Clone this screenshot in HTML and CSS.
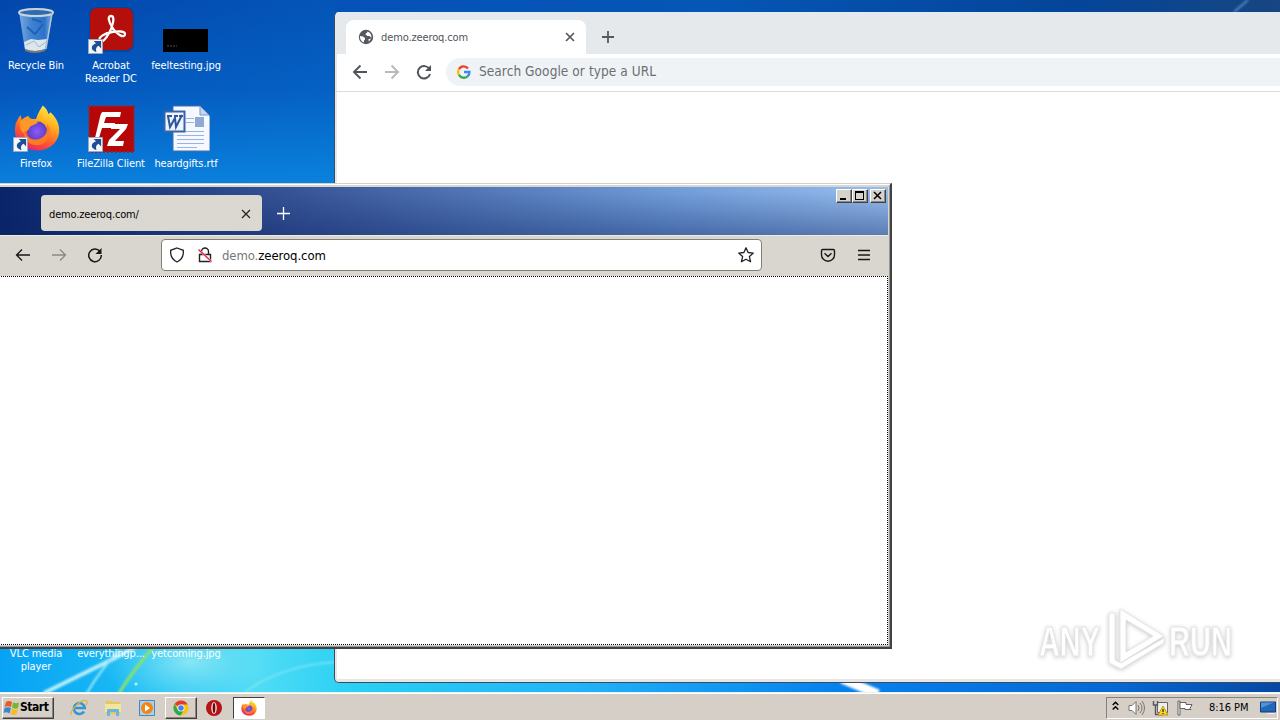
FILE: index.html
```html
<!DOCTYPE html>
<html lang="en">
<head>
<meta charset="utf-8">
<title>Desktop</title>
<link rel="stylesheet" href="styles.css">
</head>
<body>
<svg width="0" height="0" class="defs">
  <defs>
    <linearGradient id="ffBody" x1=".8" y1="0" x2=".3" y2="1"><stop offset="0" stop-color="#fff04a"/><stop offset=".35" stop-color="#ffb01f"/><stop offset=".68" stop-color="#ff5a2c"/><stop offset="1" stop-color="#e8206a"/></linearGradient>
    <radialGradient id="ffGlobe"><stop offset="0" stop-color="#9059ff"/><stop offset="1" stop-color="#5b3fc0"/></radialGradient>
    <symbol id="firefox" viewBox="0 0 48 48">
      <path fill="url(#ffBody)" d="M30 0c4 3 5 6 6 9l2-2c7 6 10 14 9 22-2 11-11 18-22 18C11 47 1 38 1 26c0-7 2-11 6-16l1 5c2-2 4-3 7-4 1 2 2 3 5 3h3c2-6 4-9 7-14z"/>
      <circle cx="24" cy="27" r="10.500" fill="url(#ffGlobe)"/>
      <path fill="#ff9829" d="M7 16c4-3 8-3 11-2 3 0 6 1 7 3-1 3-6 3-8 5-2 3-2 5-6 5l1 3C6 27 5 21 7 16z"/>
      <path fill="#ff7a25" d="M11 27c2 6 8 10 15 8 7-2 10-9 8-16 5 5 5 13 0 18-7 7-18 5-22-2-1-2-2-5-1-8z"/>
    </symbol>
    <symbol id="shortcut" viewBox="0 0 16 16"><path d="M.5.5h15v15H.5z" fill="#f3f7fc" stroke="#9aaabd"/><path d="M6 2h8v8l-2.700-2.700C8.500 8.500 8 11 9 14 2.500 12 2.500 7 8.500 4.500z" fill="#1c4f96"/></symbol>
    <symbol id="chromelogo" viewBox="0 0 18 18"><circle cx="9" cy="9" r="8.500" fill="#fbc116"/><path d="M9 9 1.600 4.800A8.500 8.500 0 0 1 16.500 5H9z" fill="#e33b2e"/><path d="M1.600 4.800A8.500 8.500 0 0 0 8.500 17.500L12.500 11 9 9 5.500 11z" fill="#2da94f"/><circle cx="9" cy="9" r="4" fill="#fff"/><circle cx="9" cy="9" r="3.100" fill="#3f82ee"/></symbol>
  </defs>
</svg>

<main class="desktop">
  <svg class="wallpaper" width="1280" height="692" viewBox="0 0 1280 692">
    <defs>
      <linearGradient id="sky" x1="0" y1="0" x2="0" y2="1"><stop offset="0" stop-color="#0346ac"/><stop offset=".13" stop-color="#0456bd"/><stop offset=".265" stop-color="#0a7fdc"/><stop offset=".9" stop-color="#079df0"/><stop offset="1" stop-color="#09a5f4"/></linearGradient>
      <linearGradient id="topBand"><stop offset="0" stop-color="#0552b8"/><stop offset=".4" stop-color="#0556b5"/><stop offset=".78" stop-color="#04459a"/><stop offset="1" stop-color="#174681"/></linearGradient>
      <linearGradient id="low"><stop offset="0" stop-color="#08a2f5"/><stop offset=".09" stop-color="#18b8f4"/><stop offset=".2" stop-color="#50dcf5"/><stop offset=".28" stop-color="#28d0f4"/><stop offset=".45" stop-color="#20b4f8"/><stop offset=".65" stop-color="#0683ef"/><stop offset=".87" stop-color="#0569d6"/><stop offset="1" stop-color="#0648a4"/></linearGradient>
      <linearGradient id="side"><stop offset="0" stop-color="#0a8fe0" stop-opacity="0"/><stop offset="1" stop-color="#0a8fe0" stop-opacity=".2"/></linearGradient>
      <radialGradient id="glow"><stop offset="0" stop-color="#9cecf5" stop-opacity=".8"/><stop offset="1" stop-color="#65dff6" stop-opacity="0"/></radialGradient>
      <filter id="soft"><feGaussianBlur stdDeviation="1"/></filter>
    </defs>
    <path fill="url(#sky)" d="M0 0h1280v692H0z"/>
    <path fill="url(#side)" d="M0 0h335v183H0z"/>
    <path fill="url(#topBand)" d="M335 0h945v12H335z"/>
    <path fill="url(#low)" d="M0 640h1280v52H0z"/>
    <ellipse cx="190" cy="662" rx="90" ry="45" fill="url(#glow)"/>
    <g fill="none" filter="url(#soft)">
      <path d="M44 693 115 658 155 636" stroke="#b9effb" stroke-width="4"/>
      <path d="M87 693Q99 672 122 646" stroke="#9ee8f7" stroke-width="2"/>
      <path d="M119 693Q132 672 155 645" stroke="#8be36a" stroke-width="3"/>
      <path d="M245 692q35-26 90-30" stroke="#7fe6f6" stroke-width="1.500"/>
      <path d="m842 679 36 15" stroke="#fff" stroke-width="9"/>
      <path d="m1234 12 14-12" stroke="#5789bd" stroke-width="2"/>
    </g>
    <circle cx="136" cy="684" r="1.500" fill="#b7f1fa"/>
  </svg>

  <section class="icons">
    <div class="icon"><svg width="48" height="48" viewBox="0 0 48 48">
      <defs><linearGradient id="bin"><stop offset="0" stop-color="#91b9e6"/><stop offset=".35" stop-color="#4c8cd6"/><stop offset=".75" stop-color="#327ace"/><stop offset="1" stop-color="#9fc3e8"/></linearGradient></defs>
      <path d="M7 5 13 43q10 5 21 0L41 5z" fill="url(#bin)" opacity=".85"/>
      <path d="m12 35 7-3 7 1 9-1-2 10q-10 4-20 0z" fill="#dce6ee"/><path d="m14 38 8-4 5 6 7-5" stroke="#a3b5c4" fill="none"/>
      <path d="M13 42q10 4 20 0v2q-10 4-20 0z" fill="#82786c"/>
      <path d="m15 20 8 7 8-10M20 12l10 3" stroke="#1d62b4" stroke-width="2" fill="none"/>
      <ellipse cx="24" cy="5.500" rx="17" ry="3.500" fill="#2f6cad" stroke="#c8d4dc" stroke-width="2"/><path d="m40 6-6 36" stroke="#b2c4d1" stroke-width="1.500"/>
    </svg><span>Recycle Bin</span></div>

    <div class="icon"><svg width="48" height="48" viewBox="0 0 48 48">
      <rect x="2" y="0" width="45" height="45" rx="8" fill="#0a3e91" opacity=".7"/><rect x="3" y="1" width="43" height="42" rx="7" fill="#b50f0b"/>
      <path d="M13 34c-3-4 6-8 12-9 6-1 13-1 13 2 0 5-8 1-13-7-3-5-5-11-1-11 5 0 1 12-2 17-3 6-7 10-9 8z" fill="none" stroke="#fff" stroke-width="2.300"/>
      <use href="#shortcut" x="1" y="32" width="15" height="15"/>
    </svg><span>Acrobat<br>Reader DC</span></div>

    <div class="icon"><svg width="48" height="48" viewBox="0 0 48 48"><path d="M1 22h45v23H1z" fill="#000"/><path d="M5 39h10" stroke="#55524b" stroke-dasharray="2 1"/></svg><span>feeltesting.jpg</span></div>

    <div class="icon"><svg width="48" height="48" viewBox="0 0 48 48"><use href="#firefox" x="2" y="0" width="46" height="47"/><use href="#shortcut" x="1" y="32" width="15" height="15"/></svg><span>Firefox</span></div>

    <div class="icon"><svg width="48" height="48" viewBox="0 0 48 48">
      <path d="M2 1h45v46H2z" fill="#b50708"/><path d="M2 1h45v46H2z" fill="none" stroke="#7b3048" stroke-width="2" stroke-dasharray="2 2"/>
      <path d="M16 7h18l-1 5H19l-2 6h11l-1 5H15l-3 10H8l5-21q1-5 3-5zM25 19h16l-2 5-11 12h9l-1 5H20l2-6 11-11h-9z" fill="#fff"/>
      <use href="#shortcut" x="1" y="32" width="15" height="15"/>
    </svg><span>FileZilla Client</span></div>

    <div class="icon"><svg width="48" height="48" viewBox="0 0 48 48">
      <path d="M11 1h27l10 10v35H11z" fill="#f5f8ff" stroke="#466fa8"/><path d="M38 1v9h9z" fill="#c4d6f3" stroke="#7899ca"/>
      <path d="M24 13.500h8m-8 4h8m-17 9h27m-27 4h27m-27 4h27m-27 4h27m-27 4h20" stroke="#9bb4dc"/><path d="M33 12h9v10h-9z" fill="#8fa9d1"/>
      <path d="M2.500 6.500h20v20h-20z" fill="#edf3ff" stroke="#3963a9" stroke-width="2"/><path d="m6 11 2 11 5-9 1 9 6-12M5 11h5m2 0h4m1 0h4" fill="none" stroke="#2b579f" stroke-width="2"/>
    </svg><span>heardgifts.rtf</span></div>

    <div class="icon last"><svg width="48" height="48" viewBox="0 0 48 48"><path d="m24 2 15 42H9z" fill="#f08a12"/></svg><span>VLC media<br>player</span></div>
    <div class="icon last"><svg width="48" height="48"></svg><span>everythingp...</span></div>
    <div class="icon last"><svg width="48" height="48"></svg><span>yetcoming.jpg</span></div>
  </section>

  <section class="chrome">
    <div class="c-tabs">
      <div class="c-tab">
        <svg width="16" height="16" viewBox="0 0 16 16"><circle cx="8" cy="8" r="7.200" fill="#55595e"/><path d="M2 7l3 .5 2 1.500v1.500l-1 1v2C3 12.500 1.800 10 2 7zM9.500 2.500c0 1.500-2 1.500-2 3l2 1.500h2L13.500 9c0-3-1-5.500-4-6.500zM10.500 10l2.500-.3-2.200 3z" fill="#fff"/></svg>
        <span>demo.zeeroq.com</span>
        <svg width="10" height="10" viewBox="0 0 10 10"><path d="m1 1 8 8M9 1 1 9" stroke="#55595e" stroke-width="1.700"/></svg>
      </div>
      <svg class="c-plus" width="12" height="12" viewBox="0 0 12 12"><path d="M6 0v12M0 6h12" stroke="#55595e" stroke-width="1.800"/></svg>
    </div>
    <div class="c-bar">
      <svg width="16" height="16" viewBox="0 0 16 16" fill="none" stroke="#505459" stroke-width="1.900"><path d="M15 8H2m6.500-6.500L2 8l6.500 6.500"/></svg>
      <svg width="16" height="16" viewBox="0 0 16 16" fill="none" stroke="#b7babd" stroke-width="1.900"><path d="M1 8h13M7.500 1.500 14 8l-6.500 6.500"/></svg>
      <svg width="16" height="16" viewBox="0 0 16 16"><path d="M13.500 5.300A6.200 6.200 0 1 0 14 10" fill="none" stroke="#505459" stroke-width="2"/><path d="M15 1v6H9z" fill="#505459"/></svg>
      <div class="c-url">
        <svg width="14" height="14" viewBox="0 0 14 14" fill="none" stroke-width="2.300"><path d="M2 4.300A5.300 5.300 0 0 1 11 3.500" stroke="#ea4335"/><path d="M2 4.200a5.300 5.300 0 0 0 0 5.600" stroke="#fbbc05"/><path d="M2 9.700a5.300 5.300 0 0 0 8.500 1.500" stroke="#34a853"/><path d="M7 7h5.500q0 3-2 4.500" stroke="#4285f4"/></svg>
        <span>Search Google or type a URL</span>
      </div>
    </div>
    <div class="c-page">
      <svg class="mark" width="245" height="80" viewBox="0 0 245 80">
        <g class="mark-ink">
          <text x="9" y="54" textLength="61" lengthAdjust="spacingAndGlyphs">ANY</text>
          <text x="139" y="54" textLength="63" lengthAdjust="spacingAndGlyphs">RUN</text>
          <path fill-rule="evenodd" d="M90 7 134 34 90 61zM96 18v32l27-16z"/>
          <path d="M85 11h-6v50l12 6 43-26v-5L91 61l-6-3z"/>
        </g>
      </svg>
    </div>
  </section>

  <section class="fox">
    <header class="f-title">
      <div class="f-tab"><span>demo.zeeroq.com/</span><svg width="10" height="10" viewBox="0 0 10 10"><path d="m1 1 8 8M9 1 1 9" stroke="#222" stroke-width="1.200"/></svg></div>
      <svg class="f-plus" width="13" height="13" viewBox="0 0 13 13"><path d="M6.500 0v13M0 6.500h13" stroke="#fff" stroke-width="1.300"/></svg>
      <div class="f-buttons">
        <i><svg width="12" height="11"><path d="M2 8h6v2H2z"/></svg></i><i><svg width="12" height="11"><path d="M1 1h9v9H1zM2 3v6h7V3z" fill-rule="evenodd"/></svg></i><i class="gap"><svg width="12" height="11"><path d="m2 2 7 7M9 2 2 9" stroke="#000" stroke-width="1.500"/></svg></i>
      </div>
    </header>
    <div class="f-bar">
      <svg width="16" height="16" viewBox="0 0 16 16" fill="none" stroke="#171717" stroke-width="1.300"><path d="M15 8H1.500M7 2.500 1.500 8 7 13.500"/></svg>
      <svg width="16" height="16" viewBox="0 0 16 16" fill="none" stroke="#8b8985" stroke-width="1.300"><path d="M1 8h13.500M9 2.500 14.500 8 9 13.500"/></svg>
      <svg width="16" height="16" viewBox="0 0 16 16"><path d="M13 4.500A6.300 6.300 0 1 0 14.300 8" fill="none" stroke="#171717" stroke-width="1.500"/><path d="M14.500 1v6h-6z" fill="#171717"/></svg>
      <div class="f-url">
        <svg width="16" height="16" viewBox="0 0 16 16" fill="none" stroke="#222" stroke-width="1.300"><path d="m8 1 6.300 2.300c.5 6-1.800 9.700-6.300 11.700-4.500-2-6.800-5.700-6.300-11.700z"/></svg>
        <svg width="16" height="16" viewBox="0 0 16 16" fill="none" stroke="#222" stroke-width="1.400"><path d="M4.500 7V4.500a3.500 3.500 0 0 1 7 0V7M2.500 7.500h11v7h-11z"/><path d="m1.500 2.500 13 12" stroke="#fff" stroke-width="2"/><path d="m1.500 2.500 13 12" stroke="#e22850" stroke-width="1.500"/></svg>
        <p><span>demo.</span>zeeroq.com</p>
        <svg class="star" width="16" height="16" viewBox="0 0 16 16" fill="none" stroke="#222" stroke-width="1.300" stroke-linejoin="round"><path d="m8 .8 2.100 4.700 5.200.6-3.900 3.500 1.200 5.200L8 12.200l-4.600 2.600 1.200-5.200L.7 6.100l5.200-.6z"/></svg>
      </div>
      <svg class="pocket" width="16" height="16" viewBox="0 0 16 16" fill="none" stroke="#171717" stroke-width="1.400"><path d="M2.700 2.500h10.600q1.200 0 1.200 1.200v4a6.500 6.500 0 0 1-13 0v-4q0-1.200 1.200-1.200z"/><path d="m4.500 6.300 3.500 3.200 3.500-3.200"/></svg>
      <svg class="burger" width="14" height="14" viewBox="0 0 14 14"><path d="M1 2.500h12M1 7h12M1 11.500h12" stroke="#171717" stroke-width="1.300"/></svg>
    </div>
    <div class="f-page"></div>
  </section>
</main>

<footer class="taskbar">
  <div class="start"><svg width="17" height="16" viewBox="0 0 17 16"><path d="M3 2q3-2 6 0L8 7Q5 5.500 1.500 7z" fill="#ea5a25"/><path d="M10 2.500q3 1.500 6 0L15 8q-3 1.500-6-.5z" fill="#75b72d"/><path d="M1.500 8Q5 6.500 8 8l-1.500 5.500q-3-2-6-.5z" fill="#318bd0"/><path d="M9 8.500q3 2 6 .5l-1.500 5.500q-3 1-6-.5z" fill="#f7bd20"/></svg><b>Start</b></div>
  <div class="quick">
    <svg width="18" height="18" viewBox="0 0 18 18" fill="none"><path d="M14 12.500A5.500 5.500 0 1 1 14.800 9H5" stroke="#3096d5" stroke-width="2.500"/><path d="M1.500 16C-1 12 12-1 16.500 2q1.500 1-.5 4" stroke="#dfb53b" stroke-width="1.300"/></svg>
    <svg width="18" height="18" viewBox="0 0 18 18"><path d="M2 2h6l1 1h7v12H2z" fill="#e8c65e"/><path d="M1 5h16v8H1z" fill="#f6e49a"/><path d="M3 17v-6q0-1 1-1h10q1 0 1 1v6h-3v-4H6v4z" fill="#67b7df"/></svg>
    <svg width="18" height="18" viewBox="0 0 18 18"><path d="M1.500 1.500h15v15h-15z" fill="#a9d2ec" stroke="#4688bd"/><circle cx="9" cy="9" r="6" fill="#f28514"/><path d="m7 5.500 5 3.500-5 3.500z" fill="#fff"/></svg>
  </div>
  <div class="task raised"><svg width="16" height="16" viewBox="0 0 18 18"><use href="#chromelogo" width="18" height="18"/></svg></div>
  <svg class="opera" width="18" height="18" viewBox="0 0 18 18"><circle cx="9" cy="9" r="8" fill="#b61218"/><ellipse cx="9" cy="9" rx="2.800" ry="6" fill="#f0d7d4"/><ellipse cx="9" cy="9" rx="1.300" ry="5" fill="#66090c"/></svg>
  <div class="task pressed"><svg width="16" height="16"><use href="#firefox"/></svg></div>
  <div class="tray">
    <svg class="up" width="7" height="10" viewBox="0 0 7 10" fill="none" stroke="#000" stroke-width="1.500"><path d="m.7 4 2.800-2.700L6.300 4M.7 8.500l2.800-2.700 2.800 2.700"/></svg>
    <svg class="speaker" width="17" height="16" viewBox="0 0 17 16" fill="none" stroke="#77736e"><path d="M1 5.500h3l4-4v13l-4-4H1z" fill="#fff"/><path d="M10 5q2 3 0 6m2-8q4 5 0 10m2-12q5 7 0 14"/></svg>
    <svg class="net" width="17" height="16" viewBox="0 0 17 16"><path d="M5.500 2.500h10v10h-10z" fill="#eee" stroke="#666"/><path d="M1.500 1v4h4V1M3.500 5v9.500h7" fill="none" stroke="#555" stroke-width="1.400"/><path d="m11 6 5 9H6z" fill="#ffd51f" stroke="#a38200" stroke-width=".7"/><path d="M11 9v3m0 1v1" stroke="#000"/></svg>
    <svg class="flag" width="16" height="16" viewBox="0 0 16 16" fill="#fff" stroke="#66625d"><path d="M1 1h2v14H1z"/><path d="M3 2.500h6v2h6l-2 4 1 1H8v-1H3z"/></svg>
    <time>8:16 PM</time>
    <svg class="show" width="16" height="14" viewBox="0 0 16 14"><path d="M.5 1h15v10H.5z" fill="#2367b7" stroke="#123f79"/><path d="M1 1.500h13L1 7z" fill="#4f94d5"/><path d="M7 12h8v1H7z" fill="#eef2f7"/></svg>
  </div>
</footer>
</body>
</html>
```
FILE: styles.css
```css
* { box-sizing: border-box; }
body { margin: 0; width: 1280px; height: 720px; overflow: hidden; display: flex; flex-direction: column; font: 11px/13px "DejaVu Sans Condensed", "DejaVu Sans", sans-serif; color: #000; }
svg { display: block; flex: none; }
.defs { position: absolute; }
.desktop { position: relative; height: 692px; overflow: hidden; }
.wallpaper { position: absolute; inset: 0; }

.icons { position: relative; display: grid; grid-template-columns: repeat(3, 75px); grid-template-rows: repeat(7, 98px); padding-top: 7px; margin-left: -2px; }
.icon { display: flex; flex-direction: column; align-items: center; gap: 4px; color: #fff; text-align: center; white-space: nowrap; letter-spacing: -.1px; }
.icon span { padding-left: 1px; }
.last { grid-row: 7; }

.chrome { position: absolute; left: 334px; top: 12px; width: 950px; height: 671px; display: flex; flex-direction: column; background: #fff; border: 1px solid #3b4b60; border-top-color: #dcecf8; border-radius: 5px; overflow: hidden; box-shadow: inset 2px 0 #e6e9ec, inset 0 -3px #e9e7e3; }
.c-tabs { height: 41px; display: flex; align-items: flex-start; background: #e6e9ec; padding: 7px 0 0 11px; }
.c-tab { width: 240px; height: 34px; display: flex; align-items: center; gap: 7px; padding: 0 11px 0 12px; background: #fff; border-radius: 8px 8px 0 0; color: #505459; }
.c-tab span { flex: 1; letter-spacing: -.12px; }
.c-plus { margin: 11px 0 0 16px; }
.c-bar { height: 38px; display: flex; align-items: center; gap: 16px; padding: 0 0 2px 17px; border-bottom: 1px solid #d9dcdf; }
.c-url { flex: 1; height: 28px; margin-left: -2px; display: flex; align-items: center; gap: 8px; padding-left: 11px; border-radius: 14px 0 0 14px; background: #f0f3f6; color: #6b6f73; font-size: 13.500px; letter-spacing: .08px; }
.c-page { flex: 1; display: flex; align-items: flex-end; padding: 0 0 0 695px; }
.mark-ink { fill: #fff; stroke: #e6e6e6; stroke-width: 1; filter: drop-shadow(0 1px 2px #c8c8c8); font: bold 42px "Liberation Sans", sans-serif; }

.fox { position: absolute; left: -5px; top: 183px; width: 897px; height: 466px; display: flex; flex-direction: column; background: #d9d6d0; border: 1px solid #d4d0c8; border-right: 2px solid #424242; border-bottom: 2px solid #424242; padding: 3px 2px 2px 3px; box-shadow: inset 0 1px #fff, inset -1px -1px #999; }
.f-title { height: 48px; display: flex; align-items: flex-start; padding: 8px 0 0 42px; background: linear-gradient(to bottom, transparent 10%, rgba(10,35,100,.42)), linear-gradient(90deg, #0a246a, #3c5a9c 37%, #6f9bd7 75%, #97bdee); }
.f-tab { width: 221px; height: 36px; display: flex; align-items: center; justify-content: space-between; padding: 2px 11px 0 8px; border-radius: 4px; background: #dbd8d2; letter-spacing: -.15px; }
.f-plus { margin: 12px 0 0 15px; }
.f-buttons { display: flex; margin: -6px 2px 0 auto; }
.f-buttons i { width: 16px; height: 14px; background: #d5d2cb; border: 1px solid; border-color: #fff #404040 #404040 #fff; box-shadow: inset -1px -1px #888; padding: 1px; }
.f-buttons .gap { margin-left: 2px; }
.f-buttons svg { margin-top: -1px; }
.f-bar { height: 41px; display: flex; align-items: center; gap: 20px; padding: 0 17px 2px 16px; border-top: 1px solid #eee9e1; }
.f-url { width: 601px; height: 32px; margin-left: 38px; display: flex; align-items: center; gap: 12px; padding: 0 7px; background: #fff; border: 1px solid #83807a; border-radius: 4px; font-size: 13px; letter-spacing: -.08px; }
.f-url p { margin: 0 auto 0 -3px; }
.f-url p span { color: #777; }
.pocket { margin-left: 38px; }
.burger { margin-left: 1px; margin-right: -1px; }
.f-page { flex: 1; background: #fff; border: 1px dotted #000; }

.taskbar { height: 28px; display: flex; align-items: center; padding: 2px 2px 0; background: #d6cfc7; border-top: 1px solid #f1f0ed; box-shadow: inset 0 1px #fff; }
.start { width: 52px; height: 22px; display: flex; align-items: center; border: 1px solid; border-color: #fff #404040 #404040 #fff; box-shadow: inset -1px -1px #8b857e; font-size: 12px; }
.start b { letter-spacing: -.45px; }
.quick { display: flex; gap: 16px; margin-left: 16px; }
.task { width: 32px; height: 22px; display: flex; align-items: center; justify-content: center; border: 1px solid; }
.raised { margin-left: 9px; border-color: #fff #404040 #404040 #fff; box-shadow: inset -1px -1px #8b857e; }
.opera { margin: 0 10px 0 8px; }
.pressed { background: #fff; border-color: #404040 #fff #fff #404040; }
.tray { width: 172px; height: 22px; margin-left: auto; display: flex; align-items: center; border: 1px solid; border-color: #86817a #fff #fff #86817a; padding-left: 5px; }
.up { margin-bottom: 3px; }
.speaker { margin-left: 9px; }
.net { margin-left: 7px; }
.flag { margin-left: 8px; }
.tray time { margin-left: 16px; letter-spacing: -.05px; white-space: nowrap; width: 40px; }
.show { margin-left: 11px; }
```
